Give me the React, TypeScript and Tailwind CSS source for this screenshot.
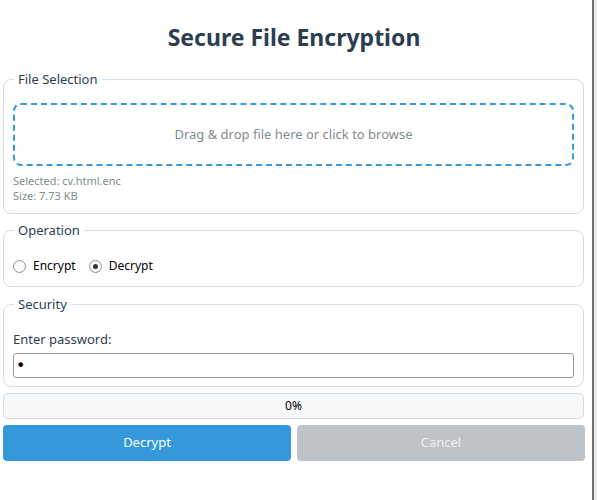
import { useState } from 'react';

const font = { fontFamily: '"Noto Sans", "Open Sans", sans-serif' };

function Radio({ checked, label, onClick }: { checked: boolean; label: string; onClick: () => void }) {
  return (
    <button onClick={onClick} className="flex items-center gap-[7px] text-[12px] leading-[18px] text-black">
      <span className="w-[13px] h-[13px] rounded-full border border-[#8f8f8f] bg-[#fdfdfd] flex items-center justify-center">
        {checked && <span className="w-[5px] h-[5px] rounded-full bg-[#333]" />}
      </span>
      {label}
    </button>
  );
}

export default function App() {
  const [mode, setMode] = useState<'encrypt' | 'decrypt'>('decrypt');
  const [password, setPassword] = useState('x');

  return (
    <div className="w-[597px] h-[500px] flex bg-white overflow-hidden" style={font}>
      {/* Window content */}
      <div className="w-[592px] h-full pl-[3px]">
        <div className="w-[582px]">
          {/* Title */}
          <h1 className="pt-[21px] h-[70px] text-center text-[23px] leading-[32px] font-bold text-[#2c3e50]">
            Secure File Encryption
          </h1>

          {/* File Selection */}
          <fieldset className="border border-[#d5dde3] rounded-lg px-[9px] pb-[10px] w-[581px]">
            <legend className="ml-px px-[4px] text-[13px] leading-[18px] text-[#2c3e50]">File Selection</legend>
            <div className="mt-[15px] h-[63px] border-2 border-dashed border-[#3498db] rounded-lg flex items-center justify-center text-[13px] text-[#7f8c8d] cursor-pointer">
              Drag &amp; drop file here or click to browse
            </div>
            <div className="mt-[7px] text-[11px] leading-[15px] text-[#7f8c8d]">
              <div>Selected: cv.html.enc</div>
              <div>Size: 7.73 KB</div>
            </div>
          </fieldset>

          {/* Operation */}
          <fieldset className="mt-[7px] border border-[#d5dde3] rounded-lg px-[9px] pb-[11px] w-[581px]">
            <legend className="ml-px px-[4px] text-[13px] leading-[18px] text-[#2c3e50]">Operation</legend>
            <div className="mt-[18px] flex items-center gap-[13px]">
              <Radio checked={mode === 'encrypt'} label="Encrypt" onClick={() => setMode('encrypt')} />
              <Radio checked={mode === 'decrypt'} label="Decrypt" onClick={() => setMode('decrypt')} />
            </div>
          </fieldset>

          {/* Security */}
          <fieldset className="mt-[8px] border border-[#d5dde3] rounded-lg px-[9px] pb-[8px] w-[581px]">
            <legend className="ml-px px-[4px] text-[13px] leading-[18px] text-[#2c3e50]">Security</legend>
            <div className="mt-[17px] text-[13px] leading-[18px] text-[#2c3e50]">Enter password:</div>
            <input
              type="password"
              value={password}
              onChange={(e) => setPassword(e.target.value)}
              className="mt-[5px] w-full h-[25px] border border-[#9a9a9a] rounded-[3px] px-[2px] text-[16px] text-black outline-none"
              style={{ fontFamily: '"DejaVu Sans", sans-serif' }}
            />
          </fieldset>

          {/* Progress */}
          <div className="mt-[6px] h-[26px] w-[581px] border border-[#d5dde3] rounded-[5px] bg-[#f6f8fa] flex items-center justify-center text-[12px] text-black">
            0%
          </div>

          {/* Buttons */}
          <div className="mt-[6px] flex gap-[6px]">
            <button className="w-[288px] h-[36px] rounded-[4px] bg-[#3498db] text-white text-[13px]">
              {mode === 'decrypt' ? 'Decrypt' : 'Encrypt'}
            </button>
            <button className="w-[288px] h-[36px] rounded-[4px] bg-[#bdc3c7] text-[#ecf0f1] text-[13px]">
              Cancel
            </button>
          </div>
        </div>
      </div>
      {/* Window edge */}
      <div className="w-[2px] h-full bg-[#6e6e6e]" />
      <div className="w-[3px] h-full bg-[#ececec]" />
    </div>
  );
}
